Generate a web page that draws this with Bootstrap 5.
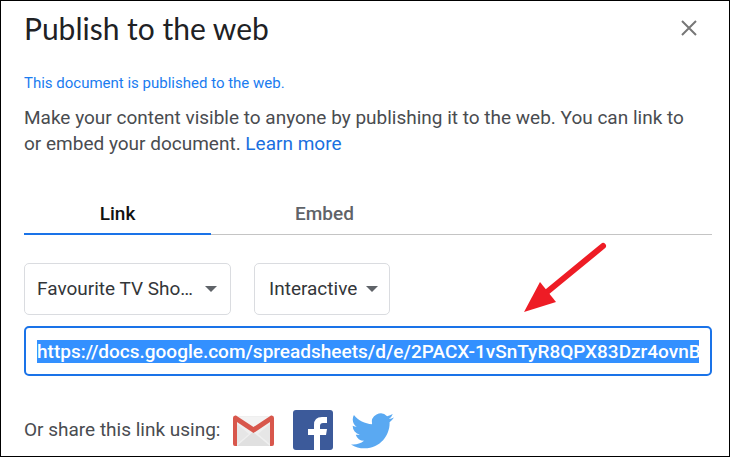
<!DOCTYPE html>
<html lang="en">
<head>
<meta charset="utf-8">
<meta name="viewport" content="width=device-width, initial-scale=1">
<title>Publish to the web</title>
<link href="https://cdn.jsdelivr.net/npm/bootstrap@5.3.0/dist/css/bootstrap.min.css" rel="stylesheet">
<style>
  body { font-family: Roboto, "Liberation Sans", sans-serif; font-size: 19px; line-height: 26px; color: #494c50; }
  .dialog-frame { min-height: 100vh; border: 1px solid #000; padding: 8px 17px 4px 23px; }
  .dialog-title { font-family: Lato, Roboto, sans-serif; font-size: 30px; line-height: 38px; color: #202124; }
  .close-btn { width: 46px; height: 36px; line-height: 0; }
  .status-note { font-size: 15px; line-height: 20px; color: #1a7cf0; margin: 26px 0 12px; }
  .intro-text { padding-right: 16px; }
  .blue-link { color: #1a6fe0; }
  .publish-tabs { border-bottom: 1px solid #c4c4c4; margin-top: 36px; gap: 20px; }
  .publish-tabs .nav-link { width: 187px; height: 42px; padding: 8px 0; border: 0; border-radius: 0; background: transparent; font-weight: 500; color: #5f6368; line-height: 26px; }
  .publish-tabs .nav-item { margin-bottom: -1px; }
  .publish-tabs .nav-link.active { color: #111; border-bottom: 2px solid #1a73e8; }
  .picker-row { gap: 23px; margin-top: 28px; }
  .picker { height: 52px; border: 1px solid #dadce0; border-radius: 5px; padding: 0 32px 0 12px; font-size: 19px; color: #333639;
    background-image: url("data:image/svg+xml,%3csvg xmlns='http://www.w3.org/2000/svg' viewBox='0 0 12 6'%3e%3cpath d='M0 0h12L6 6z' fill='%235f6368'/%3e%3c/svg%3e");
    background-size: 12px 6px; background-position: right 13px center; }
  .picker-sheet { width: 207px; }
  .picker-type { width: 136px; padding-left: 14px; background-position: right 11px center; }
  .url-box { height: 50px; margin-top: 11px; border: 2px solid #1a73e8; border-radius: 5px; padding: 0 11px; font-size: 19px; font-weight: 500; color: #333639; }
  .url-box:focus { border-color: #1a73e8; box-shadow: none; }
  .url-box::selection { background: #3390ff; color: #fff; }
  .share-row { margin-top: 33px; }
  .share-icons { gap: 17px; margin-left: 12px; }
  .share-icons svg, .close-btn svg, .pointer-arrow { display: block; }
  .pointer-arrow { top: 241px; right: 122px; }
</style>
<script src="https://cdn.jsdelivr.net/npm/bootstrap@5.3.0/dist/js/bootstrap.bundle.min.js"></script>
</head>
<body>
<main class="dialog-frame position-relative">
  <header class="d-flex justify-content-between align-items-center">
    <h1 class="dialog-title fw-normal mb-0">Publish to the web</h1>
    <button type="button" class="btn close-btn p-0 d-flex align-items-center justify-content-center" aria-label="Close">
      <svg width="16" height="16" viewBox="0 0 16 16" fill="none" stroke="#777" stroke-width="2"><path d="M1 1l14 14M15 1L1 15"/></svg>
    </button>
  </header>
  <p class="status-note">This document is published to the web.</p>
  <p class="intro-text mb-0">Make your content visible to anyone by publishing it to the web. You can link to or embed your document. <a href="#" class="blue-link text-decoration-none">Learn more</a></p>

  <ul class="nav publish-tabs" role="tablist">
    <li class="nav-item" role="presentation"><button type="button" class="nav-link active text-center" role="tab" aria-selected="true">Link</button></li>
    <li class="nav-item" role="presentation"><button type="button" class="nav-link text-center" role="tab" aria-selected="false">Embed</button></li>
  </ul>

  <div class="picker-row d-flex">
    <select class="form-select picker picker-sheet" aria-label="Content to publish"><option>Favourite TV Sho…</option></select>
    <select class="form-select picker picker-type" aria-label="Format"><option>Interactive</option></select>
  </div>
  <input id="publish-url" type="text" class="form-control url-box" aria-label="Published link" readonly value="https://docs.google.com/spreadsheets/d/e/2PACX-1vSnTyR8QPX83Dzr4ovnB">

  <div class="share-row d-flex align-items-center">
    <span>Or share this link using:</span>
    <div class="share-icons d-flex align-items-center">
      <a href="#" aria-label="Gmail">
        <svg width="43" height="42" viewBox="0 0 43 42">
          <rect x="2" y="7" width="40" height="30" rx="2" fill="#efefef"/>
          <path d="M5 37l16-14 17 14z" fill="#e0e0e0"/>
          <path d="M5 15v20l12-10zM38 15v20L26 25z" fill="#e6e6e6"/>
          <path d="M5 8l16.500 12L38 8z" fill="#f3f3f3"/>
          <path d="M1 9q0-3 3-2.500L21.500 18 39 6.500Q42 6 42 9v26q0 2-2 2h-2V13L21.500 24 5 13v24H3q-2 0-2-2z" fill="#d8574c"/>
        </svg>
      </a>
      <a href="#" aria-label="Facebook">
        <svg width="42" height="42" viewBox="0 0 42 42">
          <rect x="1" y="1" width="40" height="40" rx="3" fill="#3c5a9a"/>
          <path d="M22 41V26h-6v-6h6v-4q0-8 8-8h5v6h-4q-3 0-3 3v3h7l-1 6h-6v15z" fill="#fff"/>
        </svg>
      </a>
      <a href="#" aria-label="Twitter">
        <svg width="43" height="42" viewBox="0 0 24 23">
          <path fill="#5aa9f2" d="M23.950 4.570a10 10 0 0 1-2.820.775 4.960 4.960 0 0 0 2.160-2.720c-.950.555-2.010.960-3.130 1.180a4.920 4.920 0 0 0-8.380 4.480C7.690 8.100 4.070 6.130 1.640 3.160a4.820 4.820 0 0 0-.670 2.480c0 1.710.870 3.210 2.190 4.100a4.900 4.900 0 0 1-2.230-.620v.060a4.920 4.920 0 0 0 3.950 4.830 5 5 0 0 1-2.210.080 4.940 4.940 0 0 0 4.600 3.420A9.870 9.870 0 0 1 0 19.540a14 14 0 0 0 7.550 2.210c9.050 0 14-7.500 14-13.980 0-.210 0-.420-.020-.630a9.940 9.940 0 0 0 2.460-2.550z"/>
        </svg>
      </a>
    </div>
  </div>

  <svg class="pointer-arrow position-absolute" width="84" height="72" viewBox="0 0 84 72" aria-hidden="true">
    <path d="M80 4L24 50" stroke="#ee1c25" stroke-width="6" stroke-linecap="round"/>
    <path d="M1 70L17 40 33 60z" fill="#ee1c25"/>
  </svg>
</main>
<script>
  const urlBox = document.getElementById('publish-url');
  urlBox.focus({ preventScroll: true });
  urlBox.setSelectionRange(0, urlBox.value.length, 'backward');
  urlBox.scrollLeft = 0;
</script>
</body>
</html>
